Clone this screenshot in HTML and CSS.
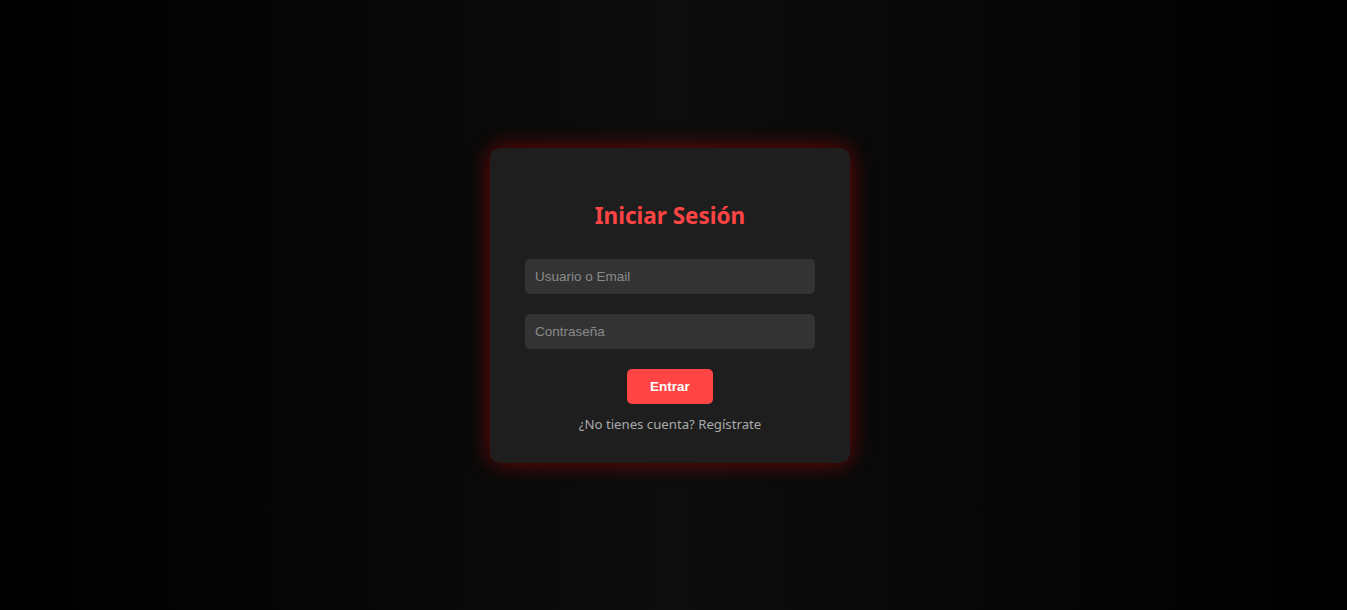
FILE: index.html
```html
<!DOCTYPE html>
<html lang="es">
<head>
<meta charset="utf-8">
<title>Iniciar Sesión</title>
<link rel="stylesheet" href="styles.css">
</head>
<body>
  <main class="page">
    <div class="card">
      <h2 class="title">Iniciar Sesión</h2>
      <form class="form">
        <input class="field" type="text" placeholder="Usuario o Email">
        <input class="field" type="password" placeholder="Contraseña">
        <button class="btn" type="button">Entrar</button>
      </form>
      <p class="link">¿No tienes cuenta? Regístrate</p>
    </div>
  </main>
</body>
</html>
```

FILE: styles.css
```css
* { box-sizing: border-box; }
html, body { height: 100%; }
body {
  margin: 0;
  font-family: "Noto Sans", "Open Sans", sans-serif;
  background: linear-gradient(to right, #000 0%, #0d0d0d 50%, #000 100%);
  color: #aaa;
}
.page {
  height: 610px;
  padding-right: 7px;
  display: flex;
  align-items: center;
  justify-content: center;
}
.card {
  width: 360px;
  height: 315px;
  margin-top: 1px;
  background: #1e1e1e;
  border-radius: 10px;
  padding: 50px 35px 30px;
  box-shadow: 0 0 22px rgba(255, 0, 0, 0.42);
  display: flex;
  flex-direction: column;
  align-items: center;
}
.title {
  margin: 0 0 25px;
  color: #ff4444;
  font-size: 22.5px;
  font-weight: 700;
  line-height: 36px;
}
.form {
  width: 100%;
  display: flex;
  flex-direction: column;
  align-items: center;
  gap: 20px;
}
.field {
  width: 100%;
  height: 35px;
  border: none;
  border-radius: 5px;
  background: #333;
  padding: 0 10px;
  font-family: "Liberation Sans", Arial, sans-serif;
  font-size: 13.5px;
  color: #ddd;
  outline: none;
}
.field::placeholder { color: #8a8a8a; }
.btn {
  width: 86px;
  height: 35px;
  border: none;
  border-radius: 5px;
  background: #ff4444;
  color: #fff;
  font-family: "Liberation Sans", Arial, sans-serif;
  font-size: 13.5px;
  font-weight: 700;
}
.link {
  margin: 10px 0 0;
  font-size: 13.2px;
  line-height: 20px;
  color: #aaa;
}
```
